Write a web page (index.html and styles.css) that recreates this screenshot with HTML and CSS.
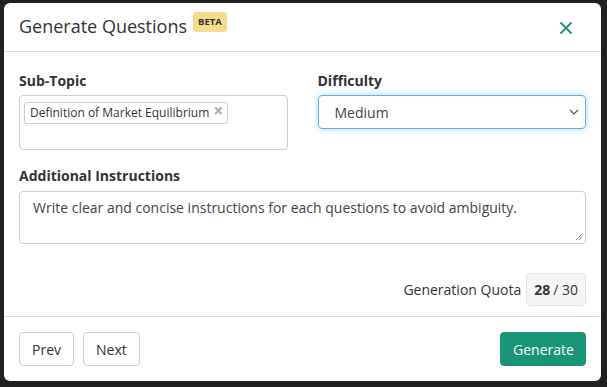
FILE: index.html
```html
<!DOCTYPE html>
<html>
<head>
<meta charset="utf-8">
<link rel="stylesheet" href="styles.css">
</head>
<body>
<div class="modal">
  <div class="header">
    <div class="title">Generate Questions <span class="badge">BETA</span></div>
    <svg class="close" width="14" height="14" viewBox="0 0 14 14"><path d="M1.5 1.5 L12.5 12.5 M12.5 1.5 L1.5 12.5" stroke="#1a9478" stroke-width="1.8" fill="none"/></svg>
  </div>
  <div class="body">
    <div class="row">
      <div class="field">
        <div class="label">Sub-Topic</div>
        <div class="tagbox"><span class="tag">Definition of Market Equilibrium <span class="tagx">×</span></span></div>
      </div>
      <div class="field">
        <div class="label">Difficulty</div>
        <div class="select"><span>Medium</span>
          <svg width="10" height="6" viewBox="0 0 10 6"><path d="M1 1 L5 5 L9 1" stroke="#555" stroke-width="1.2" fill="none"/></svg>
        </div>
      </div>
    </div>
    <div class="label label2">Additional Instructions</div>
    <div class="textarea">Write clear and concise instructions for each questions to avoid ambiguity.
      <svg class="grip" width="8" height="8" viewBox="0 0 8 8"><path d="M7 1 L1 7 M7 4 L4 7" stroke="#888" stroke-width="1"/></svg>
    </div>
    <div class="quota"><span class="qlabel">Generation Quota</span><span class="qbox"><b>28</b> / 30</span></div>
  </div>
  <div class="footer">
    <div class="nav"><button class="btn">Prev</button><button class="btn">Next</button></div>
    <button class="btn primary">Generate</button>
  </div>
</div>
</body>
</html>
```
FILE: styles.css
```css
* { box-sizing: border-box; }
body { margin: 0; background: #1f2220; font-family: "Open Sans", sans-serif; color: #333; }
.modal { margin: 3px 0 0 4px; width: 597px; height: 378px; background: #fff; border-radius: 6px; display: flex; flex-direction: column; }
.header { height: 49px; border-bottom: 1px solid #dcdcdc; padding: 0 15px; display: flex; align-items: center; justify-content: space-between; }
.title { font-size: 18px; color: #333; display: flex; align-items: center; gap: 6px; margin-top: -2px; }
.badge { font-size: 9.5px; font-weight: 700; background: #f7dc8f; color: #333; padding: 3px 5px; border-radius: 3px; line-height: 14px; margin-top: -8px; }
.close { margin-right: 13px; margin-top: 2px; }
.body { flex: 1; padding: 19px 15px 0; border-bottom: 1px solid #dcdcdc; }
.row { display: flex; gap: 30px; }
.field { flex: 1; }
.label { font-size: 14px; font-weight: 700; line-height: 20px; margin-bottom: 4px; color: #333; }
.label2 { margin-top: 16px; margin-bottom: 5px; }
.tagbox { height: 55px; border: 1px solid #ccc; border-radius: 4px; padding: 4px; }
.tag { display: inline-block; border: 1px solid #ccc; border-radius: 3px; font-size: 12px; line-height: 20px; padding: 0 4px 0 5px; color: #333; }
.tagx { color: #aaa; font-size: 17px; font-weight: 700; margin-left: 1px; line-height: 16px; vertical-align: top; }
.select { height: 34px; border: 1px solid #66afe9; border-radius: 4px; box-shadow: 0 0 6px rgba(102,175,233,0.5); display: flex; align-items: center; justify-content: space-between; padding: 0 6px 0 16px; font-size: 14px; color: #444; }
.textarea { position: relative; height: 53px; border: 1px solid #ccc; border-radius: 4px; padding: 5px 13px; font-size: 14px; color: #444; line-height: 22px; }
.grip { position: absolute; right: 2px; bottom: 2px; }
.quota { display: flex; justify-content: flex-end; align-items: center; gap: 5px; margin-top: 29px; font-size: 14px; color: #333; }
.qbox { background: #f5f5f5; border: 1px solid #e3e3e3; border-radius: 4px; height: 33px; padding: 0 7px; display: flex; align-items: center; gap: 3px; }
.footer { height: 64px; padding: 15px 15px 0; display: flex; justify-content: space-between; align-items: flex-start; }
.nav { display: flex; gap: 9px; }
.btn { font-family: "Open Sans", sans-serif; font-size: 14px; height: 34px; border: 1px solid #ccc; border-radius: 4px; background: #fff; color: #333; padding: 0 12px; }
.primary { background: #1a9478; border-color: #1a9478; color: #fff; width: 86px; }
```
